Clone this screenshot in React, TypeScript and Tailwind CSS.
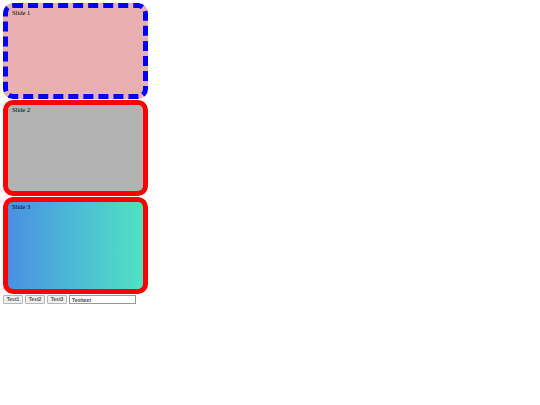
export default function App() {
  const serif = { fontFamily: '"Liberation Serif", "Times New Roman", serif' };
  const btn = "h-[9px] w-[20px] p-0 text-[5px] leading-[7px] font-bold bg-[#efefef] border border-[#b5b5b5] rounded-[1px] text-[#555] flex items-center justify-center";
  return (
    <div className="w-[540px] h-[405px] bg-white pt-[3px] pl-[3px]">
      <div className="flex flex-col gap-[1px]">
        <div className="w-[145px] h-[96px] rounded-[10px] border-[5px] border-dashed border-[#0000ff] bg-[#e8b0b0] pl-[4px] pt-[1px] text-[6.5px] leading-[8px] text-black" style={serif}>
          Slide 1
        </div>
        <div className="w-[145px] h-[96px] rounded-[10px] border-[5px] border-solid border-[#ff0000] bg-[#b3b3b3] pl-[4px] pt-[1px] text-[6.5px] leading-[8px] text-black" style={serif}>
          Slide 2
        </div>
        <div className="w-[145px] h-[97px] rounded-[10px] border-[5px] border-solid border-[#ff0000] bg-gradient-to-r from-[#4a90e2] to-[#50e3c2] pl-[4px] pt-[1px] text-[6.5px] leading-[8px] text-black" style={serif}>
          Slide 3
        </div>
      </div>
      <div className="flex items-center gap-[2px] mt-[1px]" style={{ fontFamily: '"Liberation Sans", sans-serif' }}>
        <button className={btn}>Test1</button>
        <button className={btn}>Test2</button>
        <button className={btn}>Test3</button>
        <input defaultValue="Testtext" className="h-[9px] w-[67px] px-[2px] text-[5px] leading-[7px] font-bold bg-white border border-[#999] text-[#444] outline-none" />
      </div>
    </div>
  );
}
